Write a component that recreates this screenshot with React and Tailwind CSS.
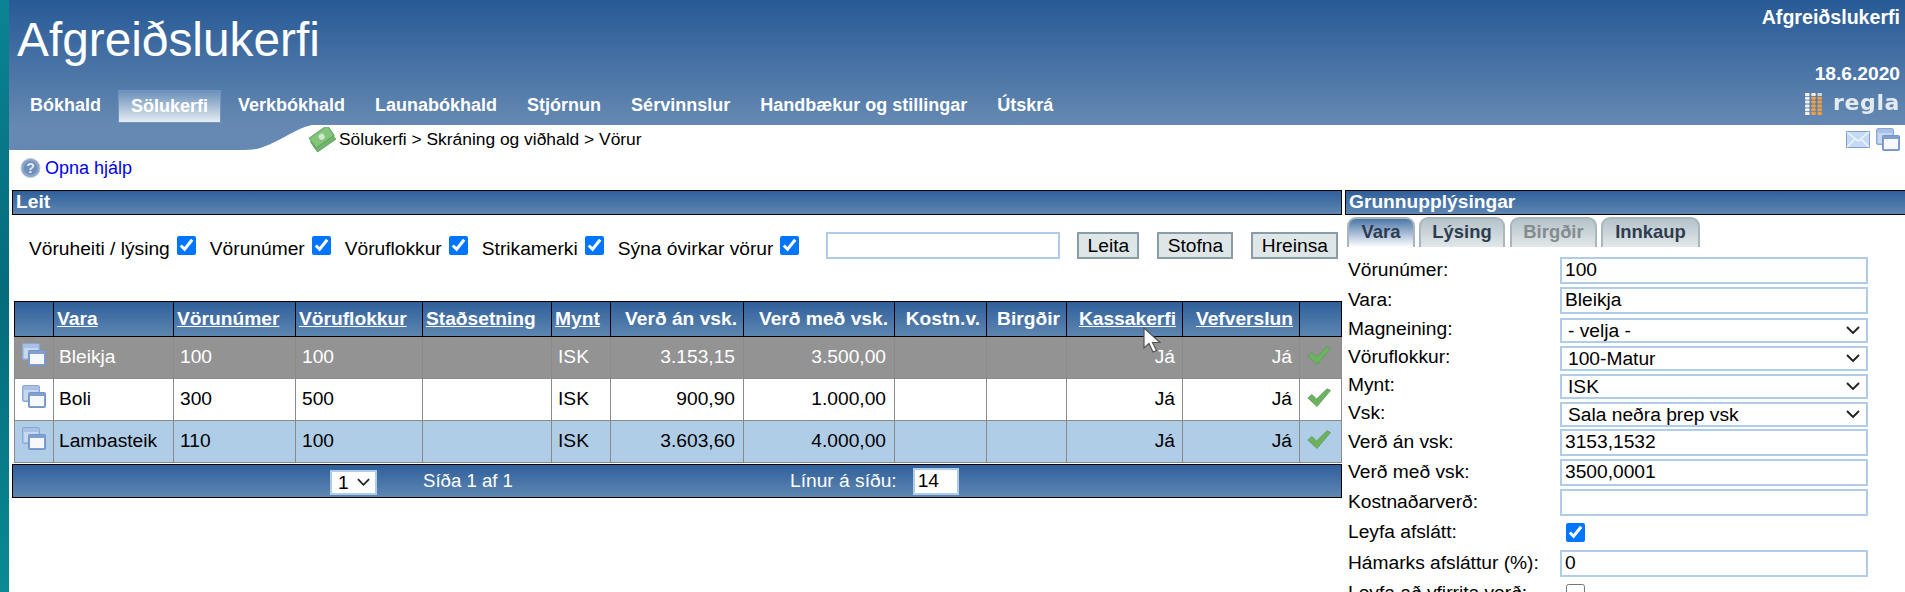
import React from "react";

const WindowsIcon = ({ className }) => (
  <svg className={className} viewBox="0 0 24 23">
    <rect x="0.5" y="0.5" width="17" height="16" rx="1.5" fill="#a9c1e6" stroke="#8ba8d4" />
    <rect x="2" y="5" width="14" height="10" fill="#c8d8ef" />
    <rect x="6.5" y="7.5" width="17" height="15" rx="1" fill="#7f9fd0" stroke="#7695c8" />
    <rect x="8" y="11" width="14" height="10" fill="#f6f8fc" />
  </svg>
);

const Check = () => (
  <svg className="block ml-[7px] mb-[5px] w-[24px] h-[19px]" viewBox="0 0 24 19">
    <path d="M0.8 10 L5 6.5 L9.5 11 L20 0.8 L23.5 2.5 L10 18.5 Z" fill="#6db35f" stroke="#5a9a58" strokeWidth="0.8" />
  </svg>
);

const Box = ({ checked = true, className = "" }) => (
  <input type="checkbox" readOnly checked={checked} className={`w-[19px] h-[19px] m-0 shrink-0 ${className}`} />
);

const Chevron = ({ className }) => (
  <svg className={`absolute pointer-events-none ${className}`} viewBox="0 0 14 8">
    <path d="M1 1 L7 7 L13 1" fill="none" stroke="#222" strokeWidth="1.9" />
  </svg>
);

const cols = [39, 120, 122, 127, 129, 59, 133, 151, 92, 80, 116, 117, 42];
const heads = [
  ["", 0, 0],
  ["Vara", 1, 0],
  ["Vörunúmer", 1, 0],
  ["Vöruflokkur", 1, 0],
  ["Staðsetning", 1, 0],
  ["Mynt", 1, 0],
  ["Verð án vsk.", 0, 1],
  ["Verð með vsk.", 0, 1],
  ["Kostn.v.", 0, 1],
  ["Birgðir", 0, 1],
  ["Kassakerfi", 1, 1],
  ["Vefverslun", 1, 1],
  ["", 0, 0],
];
const rows = [
  { bg: "bg-[#939393] text-white", d: ["Bleikja", "100", "100", "", "ISK", "3.153,15", "3.500,00"] },
  { bg: "bg-white text-black", d: ["Boli", "300", "500", "", "ISK", "900,90", "1.000,00"] },
  { bg: "bg-[#b0cde8] text-black", d: ["Lambasteik", "110", "100", "", "ISK", "3.603,60", "4.000,00"] },
];

const nav = ["Bókhald", "Sölukerfi", "Verkbókhald", "Launabókhald", "Stjórnun", "Sérvinnslur", "Handbækur og stillingar", "Útskrá"];

const Bar = ({ children, className = "" }) => (
  <div className={`h-[25px] shrink-0 border border-black bg-linear-to-b from-[#2f5f9a] to-[#5f87b2] text-white font-bold text-[19.2px] leading-[21px] pl-[3px] ${className}`}>
    {children}
  </div>
);

const Field = ({ label, children, h = "h-[27px]", mt = "mt-[3px]" }) => (
  <div className={`flex items-center shrink-0 ${h} ${mt}`}>
    <span className="w-[212px] shrink-0 whitespace-nowrap">{label}</span>
    {children}
  </div>
);

const Sel = ({ children }) => (
  <div className="relative w-[308px] h-[25px]">
    <select className="appearance-none w-full h-full border-2 border-[#b0cde8] bg-white pl-[6px] py-0 text-[19.2px] leading-[21px] outline-none">
      <option>{children}</option>
    </select>
    <Chevron className="right-[8px] top-[9px] w-[14px] h-[8px]" />
  </div>
);

const inputCls = "w-[308px] h-[27px] border-2 border-[#b0cde8] bg-white px-[3px] text-[19.2px] outline-none";

const tabs = [
  ["Vara", "w-[68px] mr-[4px] bg-linear-to-b from-[#4d77a8] to-white text-[#2e3c50]"],
  ["Lýsing", "w-[86px] mr-[5px] bg-linear-to-b from-[#b4c3ca] to-[#e2e8e9] text-[#2e3c50]"],
  ["Birgðir", "w-[87px] mr-[4px] bg-linear-to-b from-[#b4c3ca] to-[#e2e8e9] text-[#858a8e]"],
  ["Innkaup", "w-[99px] bg-linear-to-b from-[#b4c3ca] to-[#e2e8e9] text-[#2e3c50]"],
];

export default function App() {
  return (
    <div className="flex w-[1905px] h-[592px] overflow-hidden bg-white font-['Liberation_Sans',Arial,sans-serif] text-[19.2px] text-black">
      <div className="w-[9px] shrink-0 bg-linear-to-b from-[#0a8494] via-[#056b7b] to-[#0a8a93]" />
      <div className="flex-1 min-w-0 flex flex-col">
        <header className="h-[125px] shrink-0 flex justify-between bg-linear-to-b from-[#275a96] to-[#6589b2] text-white">
          <div className="pl-[8px] pt-[16px]">
            <div className="text-[47.8px] leading-[48px] h-[48px]">Afgreiðslukerfi</div>
            <nav className="flex gap-[4px] mt-[26px] h-[33px] text-[18px] font-bold">
              {nav.map((n) => (
                <div
                  key={n}
                  className={`leading-[31px] whitespace-nowrap ${n === "Sölukerfi" ? "bg-linear-to-b from-[#6a90b9] to-[#e6ecf2] border border-[#7096bf] px-[12px]" : "px-[13px]"}`}
                >
                  {n}
                </div>
              ))}
            </nav>
          </div>
          <div className="flex flex-col items-end pr-[5px] pt-[6px] font-bold text-[19.2px] leading-[22px]">
            <div className="text-[19.6px]">Afgreiðslukerfi</div>
            <div className="mt-[35px]">18.6.2020</div>
            <div className="flex items-center mt-[7px] h-[24px] gap-[10px]">
              <svg className="w-[18px] h-[22px]" viewBox="0 0 18 22">
                {[0, 1, 2, 3, 4, 5].map((r) =>
                  [0, 1, 2].map((c) => (
                    <rect
                      key={`${r}-${c}`}
                      x={c * 6.2}
                      y={r * 3.8}
                      width="4.6"
                      height="3"
                      rx="1"
                      fill={c === 0 ? "#f2f2ee" : r === 0 && c === 1 ? "#eeeeea" : r === 0 ? "#d8d8d4" : "#f0a040"}
                    />
                  ))
                )}
              </svg>
              <span className="font-['DejaVu_Sans',sans-serif] text-[22px] tracking-[0.6px] leading-[24px] text-[#e4eaf1] blur-[0.4px] pb-[2px]">regla</span>
            </div>
          </div>
        </header>

        <div className="relative h-[65px] shrink-0">
          <svg className="absolute left-0 top-0 w-[310px] h-[25px]" viewBox="0 0 310 25" preserveAspectRatio="none">
            <path d="M0 0 H303 C285 4 272 16 254 22 C248 24.5 240 25 232 25 H0 Z" fill="#6589b2" />
          </svg>
          <div className="relative flex justify-between">
            <div className="flex items-center h-[28px] pl-[299px] text-[17.4px] gap-[3px]">
              <svg className="w-[28px] h-[25px]" viewBox="0 0 28 25">
                <g transform="rotate(-35 14 12)">
                  <rect x="3" y="8" width="22" height="12" fill="#72b56c" stroke="#64a562" />
                  <rect x="4" y="4" width="22" height="12" fill="#84c47c" stroke="#64a562" />
                  <circle cx="15" cy="10" r="3" fill="#cfe9ca" />
                </g>
              </svg>
              <span className="whitespace-nowrap">Sölukerfi &gt; Skráning og viðhald &gt; Vörur</span>
            </div>
            <div className="flex items-start gap-[6px] pr-[5px] pt-[3px]">
              <svg className="w-[24px] h-[17px] mt-[3px]" viewBox="0 0 24 17">
                <rect x="0.5" y="0.5" width="23" height="16" fill="#c6daf3" stroke="#7f9fd0" />
                <path d="M1 1 L12 10 L23 1 M1 16 L9 8 M23 16 L15 8" fill="none" stroke="#eef4fb" strokeWidth="1.6" />
              </svg>
              <WindowsIcon className="w-[24px] h-[23px]" />
            </div>
          </div>
          <div className="relative flex items-center pl-[11px] mt-[5px] h-[20px] gap-[4px] text-[18px] text-[#0000ee]">
            <svg className="w-[21px] h-[20px]" viewBox="0 0 21 20">
              <circle cx="10.5" cy="10" r="9.5" fill="#8aa5cb" stroke="#bcc6d6" />
              <circle cx="10.5" cy="10" r="6.8" fill="#6e8fbd" />
              <text x="10.5" y="15" textAnchor="middle" fontSize="14" fontWeight="700" fill="#e8eef6">?</text>
            </svg>
            <span>Opna hjálp</span>
          </div>
        </div>

        <main className="flex gap-[3px] pl-[3px] min-h-0">
          <section className="w-[1330px] shrink-0">
            <Bar>Leit</Bar>
            <div className="flex items-center h-[27px] mt-[17px] pl-[17px]">
              {["Vöruheiti / lýsing", "Vörunúmer", "Vöruflokkur", "Strikamerki", "Sýna óvirkar vörur"].map((l) => (
                <div key={l} className="flex items-center gap-[7px] mr-[14px]">
                  <span className="whitespace-nowrap mt-[7px]">{l}</span>
                  <Box />
                </div>
              ))}
              <input className="w-[234px] h-[27px] ml-[13px] border-2 border-[#b0cde8] outline-none" readOnly />
              <div className="flex gap-[18px] ml-[17px]">
                {[["Leita", "w-[62px]"], ["Stofna", "w-[76px]"], ["Hreinsa", "w-[87px]"]].map(([b, w]) => (
                  <button key={b} className={`${w} h-[27px] border-2 border-[#8a9ca8] bg-[#dfe6e8] text-[19.2px] leading-[22px]`}>
                    {b}
                  </button>
                ))}
              </div>
            </div>
            <div className="relative mt-[42px] ml-[2px]">
              <table className="table-fixed border-collapse w-[1327px]">
                <colgroup>
                  {cols.map((c, i) => (
                    <col key={i} style={{ width: c }} />
                  ))}
                </colgroup>
                <thead>
                  <tr className="h-[35px] bg-linear-to-b from-[#2f5f9a] to-[#5f87b2] text-white font-bold">
                    {heads.map(([t, link, right], i) => (
                      <th
                        key={i}
                        className={`border border-black whitespace-nowrap overflow-hidden p-0 ${right ? "text-right pr-[6px]" : "text-left pl-[3px]"} font-bold ${link ? "underline" : ""}`}
                      >
                        {t}
                      </th>
                    ))}
                  </tr>
                </thead>
                <tbody>
                  {rows.map((r, ri) => (
                    <tr key={ri} className={`h-[42px] ${r.bg}`}>
                      <td className="border border-[#8a8a8a] p-0">
                        <WindowsIcon className="w-[24px] h-[23px] ml-[7px] mb-[7px]" />
                      </td>
                      {r.d.slice(0, 5).map((t, i) => (
                        <td key={i} className={`border border-[#8a8a8a] ${i === 0 ? "pl-[5px]" : "pl-[6px]"} pr-[6px] pb-[1px] whitespace-nowrap`}>{t}</td>
                      ))}
                      {r.d.slice(5).map((t, i) => (
                        <td key={i} className="border border-[#8a8a8a] pr-[8px] pb-[1px] text-right">{t}</td>
                      ))}
                      <td className="border border-[#8a8a8a]" />
                      <td className="border border-[#8a8a8a]" />
                      <td className="border border-[#8a8a8a] pr-[7px] pb-[1px] text-right">Já</td>
                      <td className="border border-[#8a8a8a] pr-[7px] pb-[1px] text-right">Já</td>
                      <td className="border border-[#8a8a8a] p-0">
                        <Check />
                      </td>
                    </tr>
                  ))}
                </tbody>
              </table>
              <svg className="absolute left-[1129px] top-[26px] w-[20px] h-[28px]" viewBox="0 0 20 28">
                <path d="M1 1 L1 21 L6 16.5 L10 25 L13.5 23.5 L9.5 15.5 L17 15.5 Z" fill="#fff" stroke="#555" strokeWidth="1.2" />
              </svg>
            </div>
            <div className="flex items-center h-[34px] mt-[1px] border border-black bg-linear-to-b from-[#2f5f9a] to-[#5f87b2] text-white pl-[317px]">
              <div className="relative w-[47px] h-[25px]">
                <select className="appearance-none w-full h-full border-2 border-[#b0cde8] bg-white text-black pl-[6px] py-0 text-[19.2px] leading-[21px] outline-none">
                  <option>1</option>
                </select>
                <Chevron className="right-[7px] top-[9px] w-[13px] h-[8px]" />
              </div>
              <span className="ml-[46px] w-[367px] text-[18.6px] whitespace-nowrap">Síða 1 af 1</span>
              <span className="whitespace-nowrap">Línur á síðu:</span>
              <input readOnly value="14" className="ml-[16px] w-[46px] h-[27px] border-2 border-[#b0cde8] bg-white text-black px-[3px] text-[19.2px] outline-none" />
            </div>
          </section>

          <aside className="flex-1 min-w-0 flex flex-col -mr-[3px]">
            <Bar>Grunnupplýsingar</Bar>
            <div className="flex h-[30px] mt-[2px] ml-[2px] shrink-0">
              {tabs.map(([t, c]) => (
                <div key={t} className={`${c} h-[30px] rounded-t-[9px] border-2 border-b-0 border-[#a9b7bd] text-center text-[18.4px] font-bold leading-[26px]`}>
                  {t}
                </div>
              ))}
            </div>
            <div className="flex flex-col pl-[3px] pt-[7px]">
              <Field label="Vörunúmer:"><input readOnly value="100" className={inputCls} /></Field>
              <Field label="Vara:"><input readOnly value="Bleikja" className={inputCls} /></Field>
              <Field label="Magneining:" h="h-[25px]"><Sel>- velja -</Sel></Field>
              <Field label="Vöruflokkur:" h="h-[25px]"><Sel>100-Matur</Sel></Field>
              <Field label="Mynt:" h="h-[25px]"><Sel>ISK</Sel></Field>
              <Field label="Vsk:" h="h-[25px]"><Sel>Sala neðra þrep vsk</Sel></Field>
              <Field label="Verð án vsk:"><input readOnly value="3153,1532" className={inputCls} /></Field>
              <Field label="Verð með vsk:"><input readOnly value="3500,0001" className={inputCls} /></Field>
              <Field label="Kostnaðarverð:"><input readOnly value="" className={inputCls} /></Field>
              <Field label="Leyfa afslátt:"><Box className="ml-[6px]" /></Field>
              <Field label="Hámarks afsláttur (%):" mt="mt-[4px]"><input readOnly value="0" className={inputCls} /></Field>
              <Field label="Leyfa að yfirrita verð:" mt="mt-[3px]"><Box checked={false} className="ml-[6px]" /></Field>
            </div>
          </aside>
        </main>
      </div>
    </div>
  );
}
